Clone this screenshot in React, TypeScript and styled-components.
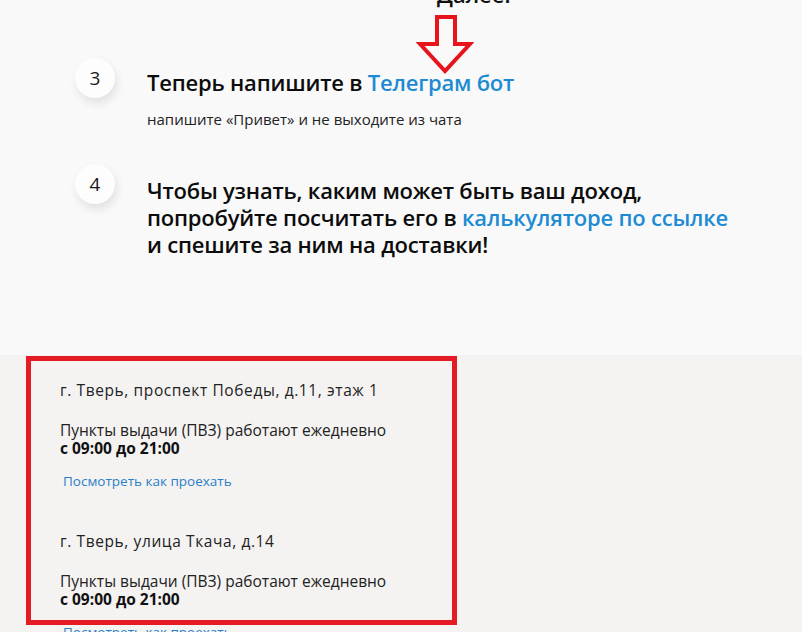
import React from 'react';
import styled, { createGlobalStyle } from 'styled-components';

const GlobalStyle = createGlobalStyle`
  html, body {
    margin: 0;
    padding: 0;
    background: #f9f9f9;
    font-family: "Open Sans", "Noto Sans", sans-serif;
    color: #111;
    overflow: hidden;
  }
`;

const Page = styled.div`
  width: 802px;
  height: 632px;
  overflow: hidden;
`;

const StepsSection = styled.section`
  position: relative;
  display: flow-root;
  height: 355px;
  background: #f9f9f9;
`;

const PrevText = styled.div`
  margin: -19px 0 0 437px;
  font-size: 22px;
  line-height: 27px;
  font-weight: 600;
  color: #111;
`;

const StepList = styled.div`
  display: flex;
  flex-direction: column;
  gap: 36px;
  padding: 50px 0 0 75px;
`;

const StepRow = styled.div`
  display: flex;
  align-items: flex-start;
  gap: 32px;
`;

const Circle = styled.div`
  flex: none;
  width: 40px;
  height: 40px;
  border-radius: 50%;
  background: #fdfdfd;
  box-shadow: 2px 5px 10px rgba(0, 0, 0, 0.1);
  display: flex;
  align-items: center;
  justify-content: center;
  font-size: 19px;
  color: #1a1a1a;
`;

const StepBody = styled.div<{ $offset?: number }>`
  padding-top: ${(p) => p.$offset ?? 11}px;
`;

const StepTitle = styled.div`
  font-size: 22px;
  line-height: 27px;
  font-weight: 600;
  color: #0c0c0c;
  letter-spacing: -0.2px;
`;

const Link = styled.a<{ $small?: boolean }>`
  color: ${(p) => (p.$small ? '#2b80c6' : '#1d8bd3')};
  text-decoration: none;
`;

const StepNote = styled.div`
  margin-top: 14px;
  font-size: 15px;
  line-height: 18px;
  color: #222;
`;

const Arrow = styled.svg`
  position: absolute;
  left: 416px;
  top: 14px;
`;

const AddressSection = styled.section`
  position: relative;
  background: #f5f3f2;
  height: 277px;
  padding: 26px 0 0 60px;
  box-sizing: border-box;
`;

const Highlight = styled.div`
  position: absolute;
  left: 26px;
  top: 1px;
  width: 421px;
  height: 259px;
  border: 5px solid #e41b24;
  pointer-events: none;
`;

const AddressList = styled.div`
  display: flex;
  flex-direction: column;
  gap: 42px;
`;

const Address = styled.div`
  display: flex;
  flex-direction: column;
  font-size: 15.5px;
  line-height: 18px;
  color: #222;
`;

const Street = styled.div`
  margin-bottom: 22px;
  letter-spacing: 0.6px;
`;

const Hours = styled.div`
  margin-bottom: 15px;
  b {
    font-weight: 700;
    color: #111;
  }
`;

const DirectionsLink = styled(Link)`
  font-size: 13.5px;
  line-height: 18px;
  margin-left: 3px;
`;

const addresses = ['г. Тверь, проспект Победы, д.11, этаж 1', 'г. Тверь, улица Ткача, д.14'];

export default function App() {
  return (
    <Page>
      <GlobalStyle />
      <StepsSection>
        <PrevText>Далее.</PrevText>
        <StepList>
          <StepRow>
            <Circle>3</Circle>
            <StepBody>
              <StepTitle>
                Теперь напишите в <Link href="#">Телеграм бот</Link>
              </StepTitle>
              <StepNote>напишите «Привет» и не выходите из чата</StepNote>
            </StepBody>
          </StepRow>
          <StepRow>
            <Circle>4</Circle>
            <StepBody $offset={13}>
              <StepTitle>
                Чтобы узнать, каким может быть ваш доход,
                <br />
                попробуйте посчитать его в <Link href="#">калькуляторе по ссылке</Link>
                <br />
                и спешите за ним на доставки!
              </StepTitle>
            </StepBody>
          </StepRow>
        </StepList>
        <Arrow width="58" height="62" viewBox="0 0 58 62">
          <path
            d="M21 3 H39 V30 H54 L29 57 L4 30 H21 Z"
            fill="none"
            stroke="#e8141c"
            strokeWidth="4"
            strokeLinejoin="miter"
          />
        </Arrow>
      </StepsSection>
      <AddressSection>
        <Highlight />
        <AddressList>
          {addresses.map((a) => (
            <Address key={a}>
              <Street>{a}</Street>
              <Hours>
                Пункты выдачи (ПВЗ) работают ежедневно
                <br />
                <b>с 09:00 до 21:00</b>
              </Hours>
              <DirectionsLink href="#" $small>
                Посмотреть как проехать
              </DirectionsLink>
            </Address>
          ))}
        </AddressList>
      </AddressSection>
    </Page>
  );
}
